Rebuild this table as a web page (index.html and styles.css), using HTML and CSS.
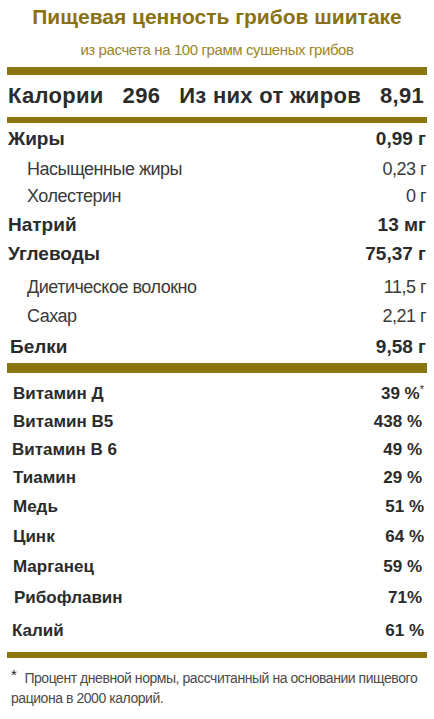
FILE: index.html
```html
<!DOCTYPE html>
<html lang="ru">

<head>
    <meta charset="UTF-8">
    <meta name="viewport" content="width=device-width, initial-scale=1.0">
    <title>Пищевая ценность грибов шиитаке</title>
    <link rel="stylesheet" href="styles.css">
</head>

<body>
    <div class="label">
        <h1 class="title">Пищевая ценность грибов шиитаке</h1>
        <p class="subtitle">из расчета на 100 грамм сушеных грибов</p>
        <div class="bar"></div>
        <div class="calories">
            <span class="cal-name">Калории</span>
            <span class="cal-num">296</span>
            <span class="cal-name">Из них от жиров</span>
            <span class="cal-num">8,91</span>
        </div>
        <div class="bar thin"></div>

        <div class="row main r-fat"><span>Жиры</span><span>0,99 г</span></div>
        <div class="row sub r-sat"><span>Насыщенные жиры</span><span>0,23 г</span></div>
        <div class="row sub r-chol"><span>Холестерин</span><span>0 г</span></div>
        <div class="row main r-na"><span>Натрий</span><span>13 мг</span></div>
        <div class="row main r-carb"><span>Углеводы</span><span>75,37 г</span></div>
        <div class="row sub r-fiber"><span>Диетическое волокно</span><span>11,5 г</span></div>
        <div class="row sub r-sugar"><span>Сахар</span><span>2,21 г</span></div>
        <div class="row main r-prot"><span class="right">Белки</span><span>9,58 г</span></div>

        <div class="bar thick"></div>

        <div class="vitamins">
            <div class="vit"><span>Витамин Д</span><span>39 %<sup>*</sup></span></div>
            <div class="vit"><span>Витамин В5</span><span class="shift">438 %</span></div>
            <div class="vit"><span class="left">Витамин В 6</span><span class="shift">49 %</span></div>
            <div class="vit"><span>Тиамин</span><span class="shift">29 %</span></div>
            <div class="vit wide"><span>Медь</span><span>51 %</span></div>
            <div class="vit wide"><span>Цинк</span><span>64 %</span></div>
            <div class="vit wide"><span>Марганец</span><span class="shift">59 %</span></div>
            <div class="vit wider"><span class="right">Рибофлавин</span><span class="shift">71%</span></div>
            <div class="vit widest"><span class="left">Калий</span><span>61 %</span></div>
        </div>

        <div class="bar thin foot-bar"></div>
        <p class="note">Процент дневной нормы, рассчитанный на основании пищевого рациона в 2000 калорий.</p>
    </div>
</body>

</html>
```

FILE: styles.css
```css
body {
    font-family: 'Liberation Sans', Arial, sans-serif;
    background-color: #fff;
    color: #2b2b2b;
    margin: 0;
}

.label {
    padding: 0 7px;
}

.title {
    margin: 0;
    height: 34px;
    line-height: 34px;
    text-align: center;
    font-size: 21px;
    font-weight: bold;
    color: #8a7112;
}

.subtitle {
    margin: 0;
    height: 33px;
    line-height: 32px;
    text-align: center;
    font-size: 15px;
    letter-spacing: -0.4px;
    color: #9a862b;
}

.bar {
    height: 8px;
    background-color: #8c7410;
}

.bar.thin {
    height: 6px;
}

.bar.thick {
    height: 10px;
}

.calories {
    display: flex;
    justify-content: space-between;
    align-items: center;
    height: 42px;
    padding: 0 3px 0 1px;
    font-size: 22px;
    font-weight: bold;
    letter-spacing: 0.3px;
}

.row {
    display: flex;
    justify-content: space-between;
    align-items: center;
    padding-right: 1px;
}

.row.main {
    padding-left: 1px;
    font-size: 19px;
    font-weight: bold;
}

.row.main .right {
    margin-left: 2px;
}

.row.sub {
    padding-left: 20px;
    font-size: 18px;
    letter-spacing: -0.5px;
    color: #3a3a3a;
}

/* высоты строк подобраны по макету */
.r-fat { height: 32px; }
.r-sat { height: 28px; }
.r-chol { height: 26px; }
.r-na { height: 31px; }
.r-carb { height: 27px; }
.r-fiber { height: 28px; padding-top: 6px; }
.r-sugar { height: 30px; }
.r-prot { height: 32px; }

.vitamins {
    padding: 7px 3px 0 6px;
}

.vit {
    display: flex;
    justify-content: space-between;
    align-items: center;
    height: 28px;
    font-size: 17px;
    font-weight: bold;
}

.vit.wide {
    height: 30px;
}

.vit.wider {
    height: 32px;
}

.vit.widest {
    height: 34px;
}

.vit .left {
    margin-left: -1px;
}

.vit .right {
    margin-left: 1px;
}

.vit .shift {
    margin-right: 2px;
}

.vit sup {
    font-size: 11px;
    font-weight: normal;
    vertical-align: 6px;
    line-height: 0;
}

.foot-bar {
    margin-top: 4px;
}

.note {
    margin: 10px 0 0;
    padding: 0 2px 0 4px;
    font-size: 14px;
    letter-spacing: -0.45px;
    line-height: 20px;
    color: #4a4a4a;
}

.note::before {
    content: "*";
    display: inline-block;
    margin-right: 8px;
    font-size: 15px;
    line-height: 14px;
    vertical-align: top;
    color: #222;
}
```
